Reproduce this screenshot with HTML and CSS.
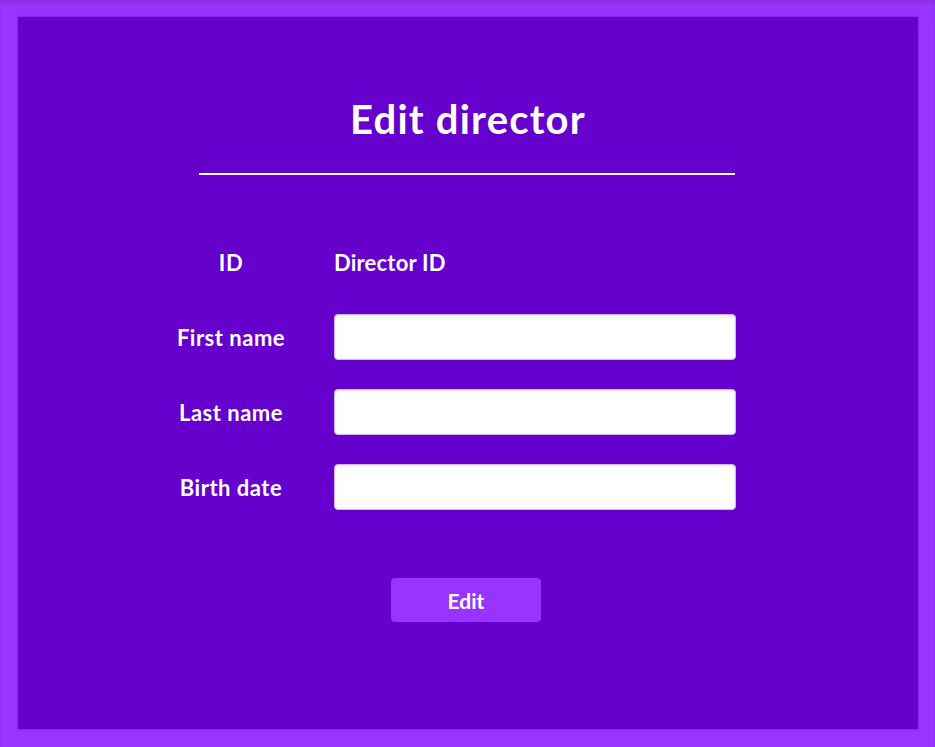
FILE: index.html
```html
<!DOCTYPE html>
<html lang="en">
<head>
<meta charset="utf-8">
<title>Edit director</title>
<link rel="stylesheet" href="styles.css">
</head>
<body>
<main class="panel">
  <h1 class="title">Edit director</h1>
  <hr class="rule">
  <form class="form">
    <div class="grid">
      <label class="label">ID</label>
      <div class="value">Director ID</div>
      <label class="label" for="fn">First name</label>
      <input class="input" id="fn" type="text">
      <label class="label" for="ln">Last name</label>
      <input class="input" id="ln" type="text">
      <label class="label" for="bd">Birth date</label>
      <input class="input" id="bd" type="text">
    </div>
    <div class="actions">
      <button class="button" type="button">Edit</button>
    </div>
  </form>
</main>
</body>
</html>
```
FILE: styles.css
```css
html, body {
  margin: 0;
  padding: 0;
}
body {
  background: #9933ff;
  font-family: "Lato", "Open Sans", sans-serif;
  color: #ffffff;
  padding: 17px 17px 18px 18px;
  height: 747px;
  box-sizing: border-box;
  box-shadow: inset 0 3px 3px rgba(0, 0, 0, 0.12);
}
.panel {
  background: #6600cc;
  width: 900px;
  height: 712px;
  box-sizing: border-box;
  padding-top: 79px;
  box-shadow: 0 0 2px rgba(60, 0, 120, 0.5);
  display: flex;
  flex-direction: column;
}
.title {
  margin: 0;
  text-align: center;
  font-size: 40px;
  font-weight: 700;
  line-height: 46px;
  letter-spacing: 1.2px;
}
.rule {
  width: 536px;
  margin: 31px 0 0 181px;
  border: 0;
  height: 2px;
  background: #ffffff;
}
.form {
  margin-top: 64px;
  margin-left: 143px;
}
.grid {
  display: grid;
  grid-template-columns: 140px 402px;
  column-gap: 33px;
  grid-auto-rows: 46px;
  row-gap: 29px;
  align-items: center;
}
.label {
  text-align: center;
  font-size: 22px;
  font-weight: 700;
  letter-spacing: 0.5px;
}
.value {
  font-size: 22px;
  font-weight: 700;
  letter-spacing: 0.2px;
}
.input {
  box-sizing: border-box;
  height: 46px;
  width: 402px;
  margin: 0;
  background: #ffffff;
  border: 1px solid #cdbde6;
  border-radius: 4px;
  box-shadow: inset 0 1px 3px rgba(0, 0, 0, 0.12);
  font-size: 18px;
}
.actions {
  margin-top: 68px;
  padding-left: 230px;
}
.button {
  width: 150px;
  height: 44px;
  border: 0;
  border-radius: 4px;
  background: #9933ff;
  color: #ffffff;
  font-family: "Lato", "Open Sans", sans-serif;
  font-size: 21px;
  font-weight: 700;
  cursor: pointer;
}
```
